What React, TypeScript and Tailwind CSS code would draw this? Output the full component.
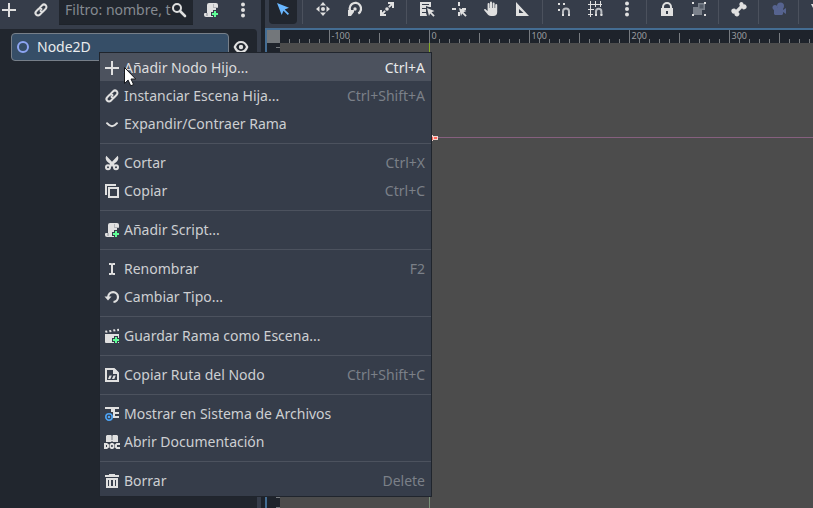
import React from "react";

type IconName =
  | "add" | "link" | "chevron" | "cut" | "copy" | "script" | "rename" | "reload"
  | "scene" | "path" | "files" | "docs" | "trash" | "move" | "rotate" | "scale"
  | "list" | "pivot" | "hand" | "ruler" | "snap" | "grid" | "lock" | "group"
  | "bone" | "camera" | "dots" | "search" | "eye" | "select";

const plus = (
  <>
    <path d="M10 8h4v2h2v4h-2v2h-4v-2H8v-4h2z" fill="#363d4a" />
    <path d="M11 9h2v2h2v2h-2v2h-2v-2H9v-2h2z" fill="#5fff97" />
  </>
);

const shapes: Record<IconName, React.ReactNode> = {
  add: <path d="M7 1h2v6h6v2H9v6H7V9H1V7h6z" />,
  link: (
    <g fill="none" stroke="#e0e0e0" strokeWidth="2" transform="rotate(-45 8 8)">
      <path d="M8.500 5.500h3.700a2.500 2.500 0 0 1 0 5H9.500a2.500 2.500 0 0 1-2.500-2.200" strokeLinecap="round" />
      <path d="M7.500 10.500H3.800a2.500 2.500 0 0 1 0-5h2.700a2.500 2.500 0 0 1 2.500 2.200" strokeLinecap="round" />
    </g>
  ),
  chevron: <path d="M3 7.200Q5.500 10.200 8 10.200T13 7.200" fill="none" stroke="#e0e0e0" strokeWidth="2" strokeLinecap="round" strokeLinejoin="round" />,
  cut: (
    <>
      <path d="M2.300.8c-1.200 2-.6 4.200.8 5.700l3 2.500L4.500 11 7 12.300l1-1.600 1 1.600 2.500-1.300L9.900 9l3-2.500c1.400-1.500 2-3.700.8-5.700L8 6.700z" />
      <g fill="none" stroke="#e0e0e0" strokeWidth="2"><circle cx="4" cy="12.200" r="2" /><circle cx="12" cy="12.200" r="2" /></g>
    </>
  ),
  copy: <path d="M1 1v11h2V3h9V1zm3 3v11h11V4zm2 2h7v7H6z" fillRule="evenodd" />,
  script: (
    <>
      <path d="M6 1a2 2 0 0 0-2 2v8H2a1 1 0 0 0-1 1v1a2 2 0 0 0 2 2h7V8h3V5h2V3a2 2 0 0 0-2-2z" />
      <path d="M10 2h1v3h4v1h-5zM3 11h2v3H3z" fill="#b3b5b9" />
      {plus}
    </>
  ),
  rename: <path d="M5 2h2l1 .5L9 2h2v2H9v8h2v2H9l-1-.5L7 14H5v-2h2V4H5z" />,
  reload: (
    <>
      <path d="M4.200 8A4.900 4.900 0 1 1 9.500 13" fill="none" stroke="#e0e0e0" strokeWidth="2.200" />
      <path d="M.5 7.500h7l-3.500 4z" />
    </>
  ),
  scene: (
    <>
      <path d="M1 6h14v9H2a1 1 0 0 1-1-1z" />
      <path d="m1 2.800 2-.3.6 2-2 .3zm4-.6 2-.3.6 2-2 .3zm4-.6 2-.3.6 2-2 .3zm4-.6 2-.3v2.300l-1.600.2z" />
      {plus}
    </>
  ),
  path: (
    <>
      <path d="M2 2h8l4 4v8H2z" fill="none" stroke="#e0e0e0" strokeWidth="2" />
      <path d="M9 2h2l3 3v2H9zM5.500 8.500h2.300L6.300 12H4zm4 0h2.300L10.300 12H8z" />
    </>
  ),
  files: (
    <>
      <path d="M1 1h14v2h-4v3h4v2h-4v2h4v2H9V6H7V3H1z" />
      <circle cx="5" cy="11" r="3.200" fill="none" stroke="#4da3f5" strokeWidth="1.600" />
      <circle cx="5" cy="11" r="1.300" fill="#4da3f5" />
    </>
  ),
  docs: (
    <>
      <path d="M3 1h4l1 1 1-1h4l1 1v6H9L8 7 7 8H2V2z" />
      <path d="M7.500 1h1v5h-1z" fill="#777c84" />
      <path d="M0 9h3l2 1.500v3L3 15H0zm2 2v2h1v-2zm5-2h2l1.500 1.500v3L9 15H7l-1.500-1.500v-3zm.2 2v2h1.500v-2zM12.500 9H16v2h-3v2h3v2h-3.500L11 13.500v-3z" fillRule="evenodd" />
    </>
  ),
  trash: <path d="M5 1h6v1h4v2H1V2h4zM2 5h12v10H2zm2 2v6h1V7zm3 0v6h2V7zm4 0v6h1V7z" fillRule="evenodd" />,
  move: (
    <>
      <path d="m8 1 3 3.500H5zM8 15l-3-3.500h6zM1 8l3.500-3v6zM15 8l-3.500 3V5z" />
      <circle cx="8" cy="8" r="2" />
    </>
  ),
  rotate: (
    <>
      <path d="M4.200 11.500A5.700 5.700 0 1 1 11.300 12.500" fill="none" stroke="#e0e0e0" strokeWidth="2.300" />
      <path d="M1 9h6v2L4 15H1z" />
      <circle cx="8" cy="8" r="1.700" />
    </>
  ),
  scale: (
    <>
      <path d="M9 1h6v6h-2V4.500l-2.500 2.300-1.300-1.300L11.500 3H9zM1 9h2v2.500l2.500-2.300 1.300 1.300L4.500 13H7v2H1z" />
      <circle cx="8" cy="8" r="1.800" />
    </>
  ),
  list: (
    <>
      <path d="M1 1h11v5h-2l-3-1v7l1 3H1zm2 2v1h7V3zm0 4v1h4V7zm0 4v1h4v-1z" fillRule="evenodd" />
      <path d="m8 7 7.500 3-3 1.200 3.200 3.200-1.300 1.300-3.200-3.200L10 15z" />
    </>
  ),
  pivot: (
    <>
      <path d="M7 1h2v4H7zM1 7h4v2H1zM11 7h4v2h-4zM7 11h2v4H7z" />
      <path d="m8 7 7.500 3-3 1.200 3.200 3.200-1.300 1.300-3.200-3.200L10 15z" />
    </>
  ),
  hand: <path d="M7 1.500a1 1 0 0 1 2 0V7h.6V2.500a1 1 0 0 1 2 0V7h.6V4a1 1 0 0 1 2 0v7a4 4 0 0 1-4 4H8c-2 0-3-1-4-2.500L1.200 9.200c-.5-1.200 1-1.500 1.600-.8L4.600 10V3a1 1 0 0 1 2 0v4H7z" />,
  ruler: <path d="M2 1v14h13zm3 7 4.500 4H5z" fillRule="evenodd" />,
  snap: (
    <>
      <path d="M2 2h2v2H2zM7 2h2v2H7zM2 8h2v2H2z" />
      <path d="M7 14v-3.500a3 3 0 0 1 6 0V14" fill="none" stroke="#b9bcc1" strokeWidth="2" />
      <path d="M6 13h2v2H6zM12 13h2v2h-2z" />
    </>
  ),
  grid: (
    <>
      <path d="M3 0h1v3h4V0h1v3h4V0h1v3h1v1h-1v2h-1V4H9v2H8V4H4v4h3v1H4v4h2v1H4v2H3v-2H1v-1h2V9H1V8h2V4H1V3h2z" />
      <path d="M9 14v-3.500a2.700 2.700 0 0 1 5.400 0V14" fill="none" stroke="#b9bcc1" strokeWidth="2" />
      <path d="M8 13h2v2H8zM13.400 13h2v2h-2z" />
    </>
  ),
  lock: <path d="M8 1a5 5 0 0 0-5 5v1H2v8h12V7h-1V6a5 5 0 0 0-5-5m0 2a3 3 0 0 1 3 3v1H5V6a3 3 0 0 1 3-3M7 10h2v3H7z" fillRule="evenodd" />,
  group: (
    <>
      <path d="M7 2h7v7h-7z" fill="#7b818b" />
      <path d="M8.500 3.500h4v4h-4z" fill="#555c68" />
      <path d="M2 6h5v3h4v5H2z" fill="#7b818b" />
      <path d="M1 1h2v2H1zM13 1h2v2h-2zM1 13h2v2H1zM13 13h2v2h-2z" />
    </>
  ),
  bone: <path d="M10.500 1a2.300 2.300 0 0 0-1.800 3.500L8.800 5 5 8.800a2.500 2.500 0 1 0-1.500 3.700 2.500 2.500 0 1 0 3.800-1.600L11 7.200a2.500 2.500 0 1 0 1.600-3.800A2.300 2.300 0 0 0 10.500 1" />,
  camera: (
    <g fill="#56638f">
      <circle cx="9.500" cy="5" r="3.500" /><circle cx="4" cy="6.500" r="2.500" />
      <path d="M3 7h9v2l3-2v6l-3-2v2l-1 1H4l-1-1z" />
    </g>
  ),
  dots: <><circle cx="8" cy="2.500" r="2" /><circle cx="8" cy="8" r="2" /><circle cx="8" cy="13.500" r="2" /></>,
  search: (
    <>
      <circle cx="6" cy="6" r="4" fill="none" stroke="#dedede" strokeWidth="2" />
      <path d="m9 9 5 5" stroke="#dedede" strokeWidth="2.600" strokeLinecap="round" />
    </>
  ),
  eye: (
    <>
      <path d="M1.800 8C3 4.800 5 3 8 3s5 1.800 6.200 5C13 11.200 11 13 8 13s-5-1.800-6.200-5z" fill="none" stroke="#e0e0e0" strokeWidth="2.200" />
      <circle cx="8" cy="8" r="2.200" />
    </>
  ),
  select: <path d="m2 2 12 4.700-4.300 1.800L14 12.800 12.800 14l-4.300-4.300L6.700 14z" fill="#69b7ff" />,
};

function Icon({ name, className = "" }: { name: IconName; className?: string }) {
  return (
    <svg viewBox="0 0 16 16" className={`size-4 shrink-0 fill-[#e0e0e0] ${className}`}>
      {shapes[name]}
    </svg>
  );
}

interface Entry {
  icon: IconName;
  label: string;
  keys?: string;
  active?: boolean;
}

const sections: Entry[][] = [
  [
    { icon: "add", label: "Añadir Nodo Hijo...", keys: "Ctrl+A", active: true },
    { icon: "link", label: "Instanciar Escena Hija...", keys: "Ctrl+Shift+A" },
    { icon: "chevron", label: "Expandir/Contraer Rama" },
  ],
  [
    { icon: "cut", label: "Cortar", keys: "Ctrl+X" },
    { icon: "copy", label: "Copiar", keys: "Ctrl+C" },
  ],
  [{ icon: "script", label: "Añadir Script..." }],
  [
    { icon: "rename", label: "Renombrar", keys: "F2" },
    { icon: "reload", label: "Cambiar Tipo..." },
  ],
  [{ icon: "scene", label: "Guardar Rama como Escena..." }],
  [{ icon: "path", label: "Copiar Ruta del Nodo", keys: "Ctrl+Shift+C" }],
  [
    { icon: "files", label: "Mostrar en Sistema de Archivos" },
    { icon: "docs", label: "Abrir Documentación" },
  ],
  [{ icon: "trash", label: "Borrar", keys: "Delete" }],
];

function ContextMenu() {
  return (
    <div className="absolute left-[99px] top-[52px] w-[333px] border border-[#20252d] bg-[#363d4a] pb-0.5">
      {sections.map((section, i) => (
        <div key={i}>
          {i > 0 && <div className="mb-1 mt-1.5 h-px bg-[#4c525e]" />}
          {section.map((item) => (
            <div
              key={item.label}
              className={`flex h-7 items-center pl-1 pr-1.5 pt-[2px] text-sm ${item.active ? "bg-[#4c525e]" : ""}`}
            >
              <Icon name={item.icon} />
              <span className={`ml-1 whitespace-nowrap ${item.active ? "text-[#dddddf]" : "text-[#cdcfd2]"}`}>{item.label}</span>
              {item.keys && (
                <span className={`ml-auto ${item.active ? "text-[#e8e9ea]" : "text-[#7b8088]"}`}>{item.keys}</span>
              )}
            </div>
          ))}
        </div>
      ))}
    </div>
  );
}

function Divider({ className }: { className: string }) {
  return <div className={`h-6 w-px shrink-0 bg-[#4b515d] ${className}`} />;
}

function Toolbar() {
  return (
    <div className="flex h-7 shrink-0 items-start overflow-hidden bg-[#363d4a]">
      <div className="ml-1 flex h-6 w-7 shrink-0 items-start justify-center rounded-b-sm bg-[#21262e] pt-px">
        <Icon name="select" />
      </div>
      <Divider className="ml-[5px]" />
      <Icon name="move" className="ml-3 mt-px" />
      <Icon name="rotate" className="ml-4 mt-px" />
      <Icon name="scale" className="ml-4 mt-px" />
      <Divider className="ml-[11px]" />
      <Icon name="list" className="ml-3 mt-px" />
      <Icon name="pivot" className="ml-4 mt-px" />
      <Icon name="hand" className="ml-4 mt-px" />
      <Icon name="ruler" className="ml-[15px] mt-px" />
      <Divider className="ml-[12px]" />
      <Icon name="snap" className="ml-[13px] mt-px" />
      <Icon name="grid" className="ml-[15px] mt-px" />
      <Icon name="dots" className="ml-4 mt-px" />
      <Divider className="ml-[11px]" />
      <Icon name="lock" className="ml-3 mt-px" />
      <Icon name="group" className="ml-4 mt-px" />
      <Divider className="ml-[11px]" />
      <Icon name="bone" className="ml-3 mt-px" />
      <Divider className="ml-[11px]" />
      <Icon name="camera" className="ml-3 mt-px" />
      <Divider className="ml-[11px]" />
      <svg viewBox="0 0 4 4" className="ml-3 mt-1 h-1 w-1 shrink-0 fill-[#e0e0e0]"><path d="M0 0h4v4H2z" /></svg>
    </div>
  );
}

const ticks = Array.from({ length: 55 }, (_, i) => i - 14);

function Ruler() {
  return (
    <svg viewBox="280 30 533 13" className="h-[13px] w-[533px] bg-[#1e232b]">
      {ticks.map((t) => {
        const major = t % 10 === 0;
        const half = t % 5 === 0;
        return <rect key={t} x={429 + t * 10} y={major ? 28 : half ? 33 : 39} width="1" height="15" fill="#777b80" />;
      })}
      {[-1, 0, 1, 2, 3].map((n) => (
        <text key={n} x={431.500 + n * 100} y="39" fontSize="9" fill="#9b9da1">{n * 100}</text>
      ))}
    </svg>
  );
}

function SceneDock() {
  return (
    <div className="flex w-[261px] shrink-0 flex-col bg-[#363d4a] pr-1">
      <div className="flex h-[29px] shrink-0 items-start">
        <Icon name="add" className="ml-px mt-[2px]" />
        <Icon name="link" className="ml-4 mt-[2px]" />
        <div className="ml-[10px] flex h-[25px] w-[134px] border-b border-[#1e232a] bg-[#21262e] pl-[6px] text-sm leading-[19px] text-[#858a91]">
          <span className="w-[106px] whitespace-nowrap">Filtro: nombre, t</span>
          <Icon name="search" className="mt-[2px]" />
        </div>
        <Icon name="script" className="ml-[10px] mt-[2px]" />
        <Icon name="dots" className="ml-4 mt-[2px]" />
      </div>
      <div className="flex flex-1 items-start rounded-tr-sm bg-[#21262e] pl-[11px] pt-1">
        <div className="flex h-7 w-[218px] items-center rounded-sm border border-[#777f89] bg-[#364e67] pl-[3px] text-sm text-[#e9ebed]">
          <svg viewBox="0 0 16 16" className="size-4"><circle cx="8" cy="8" r="5" fill="none" stroke="#8da5f3" strokeWidth="2" /></svg>
          <span className="ml-[6px]">Node2D</span>
        </div>
        <Icon name="eye" className="ml-1 mt-[6px]" />
      </div>
    </div>
  );
}

export default function App() {
  return (
    <div className="relative flex h-[508px] w-[813px] overflow-hidden bg-[#1e232b] font-['Noto_Sans',sans-serif]">
      <SceneDock />
      <div className="w-1 shrink-0 bg-[#1e232b]" />
      <div className="flex min-w-0 flex-1 flex-col">
        <Toolbar />
        <div className="flex flex-1 flex-col border-l-2 border-t-2 border-[#446d93]">
          <div className="flex h-[13px] shrink-0">
            <div className="w-[13px] bg-[#73777b]" />
            <Ruler />
          </div>
          <div className="flex flex-1">
            <svg viewBox="0 0 13 465" className="h-[465px] w-[13px] bg-[#1e232b]">
              <path d="M9 4.500h4M9 454.500h4M9 464.500h4" stroke="#777b80" />
            </svg>
            <svg viewBox="280 43 533 465" className="h-[465px] w-[533px] bg-[#4c4c4c]">
              <rect x="429" y="43" width="1" height="95" fill="#83ad24" />
              <rect x="429" y="138" width="1" height="370" fill="#799079" />
              <rect x="430" y="137" width="383" height="1" fill="#86607f" />
              <path d="M431 135h2v1h5v4h-5v1h-2z" fill="#eed5cf" />
              <path d="M432 137h1v3h-1zM434 137h3v2h-3z" fill="#ff6558" />
            </svg>
          </div>
        </div>
      </div>
      <ContextMenu />
      <svg viewBox="0 0 14 21" className="absolute left-[123px] top-[66px] h-[21px] w-[14px]">
        <path d="M1.500 1.500v16l3.600-3.400 2.600 5.700 2.900-1.300-2.600-5.500h4.700z" fill="#fff" stroke="#14161b" />
      </svg>
    </div>
  );
}
